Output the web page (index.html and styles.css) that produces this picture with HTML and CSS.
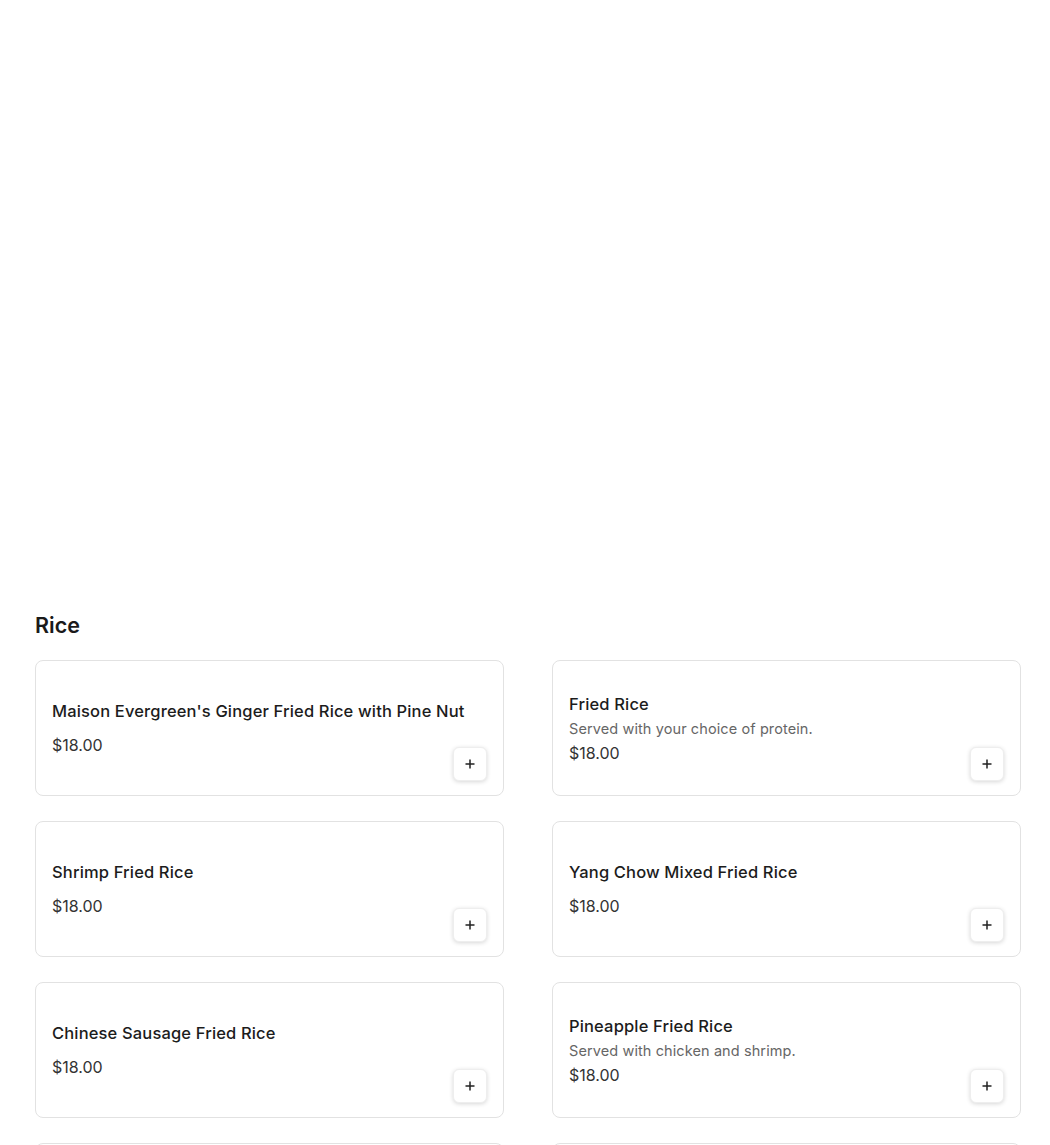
FILE: index.html
```html
<!DOCTYPE html>
<html lang="en">
<head>
<meta charset="utf-8">
<title>Rice</title>
<link rel="stylesheet" href="styles.css">
</head>
<body>
<div class="hero"></div>
<section class="section">
  <h2 class="section-title">Rice</h2>
  <div class="grid">
    <div class="card">
      <div class="info">
        <div class="name">Maison Evergreen's Ginger Fried Rice with Pine Nut</div>
        <div class="price">$18.00</div>
      </div>
      <button class="add" aria-label="Add"><svg viewBox="0 0 12 12" width="12" height="12"><path d="M6 1.5v9M1.5 6h9" stroke="#222" stroke-width="1.5" fill="none"/></svg></button>
    </div>
    <div class="card">
      <div class="info">
        <div class="name">Fried Rice</div>
        <div class="desc">Served with your choice of protein.</div>
        <div class="price">$18.00</div>
      </div>
      <button class="add" aria-label="Add"><svg viewBox="0 0 12 12" width="12" height="12"><path d="M6 1.5v9M1.5 6h9" stroke="#222" stroke-width="1.5" fill="none"/></svg></button>
    </div>
    <div class="card">
      <div class="info">
        <div class="name">Shrimp Fried Rice</div>
        <div class="price">$18.00</div>
      </div>
      <button class="add" aria-label="Add"><svg viewBox="0 0 12 12" width="12" height="12"><path d="M6 1.5v9M1.5 6h9" stroke="#222" stroke-width="1.5" fill="none"/></svg></button>
    </div>
    <div class="card">
      <div class="info">
        <div class="name">Yang Chow Mixed Fried Rice</div>
        <div class="price">$18.00</div>
      </div>
      <button class="add" aria-label="Add"><svg viewBox="0 0 12 12" width="12" height="12"><path d="M6 1.5v9M1.5 6h9" stroke="#222" stroke-width="1.5" fill="none"/></svg></button>
    </div>
    <div class="card">
      <div class="info">
        <div class="name">Chinese Sausage Fried Rice</div>
        <div class="price">$18.00</div>
      </div>
      <button class="add" aria-label="Add"><svg viewBox="0 0 12 12" width="12" height="12"><path d="M6 1.5v9M1.5 6h9" stroke="#222" stroke-width="1.5" fill="none"/></svg></button>
    </div>
    <div class="card">
      <div class="info">
        <div class="name">Pineapple Fried Rice</div>
        <div class="desc">Served with chicken and shrimp.</div>
        <div class="price">$18.00</div>
      </div>
      <button class="add" aria-label="Add"><svg viewBox="0 0 12 12" width="12" height="12"><path d="M6 1.5v9M1.5 6h9" stroke="#222" stroke-width="1.5" fill="none"/></svg></button>
    </div>
    <div class="card card-peek"></div>
    <div class="card card-peek"></div>
  </div>
</section>
</body>
</html>
```
FILE: styles.css
```css
* { box-sizing: border-box; }
html, body { margin: 0; padding: 0; background: #fff; }
body {
  font-family: "Inter", "Liberation Sans", sans-serif;
  color: #1f1f1f;
}
.hero { height: 610px; }
.section { padding: 0 0 40px 35px; width: 1021px; }
.section-title {
  margin: 0 0 20px;
  font-size: 21.5px;
  line-height: 30px;
  font-weight: 600;
  color: #1a1a1a;
}
.grid {
  display: grid;
  grid-template-columns: 1fr 1fr;
  column-gap: 48px;
  row-gap: 25px;
}
.card {
  position: relative;
  display: flex;
  align-items: center;
  height: 136px;
  padding: 0 16px;
  border: 1px solid #e2e2e2;
  border-radius: 8px;
  background: #fff;
}
.info { flex: 1; min-width: 0; }
.name {
  font-size: 16.5px;
  line-height: 24px;
  font-weight: 500;
  color: #1c1c1c;
  letter-spacing: 0.15px;
}
.desc {
  margin-top: 2px;
  font-size: 14.5px;
  line-height: 21px;
  color: #666;
  letter-spacing: 0.1px;
}
.price {
  margin-top: 10px;
  font-size: 16px;
  line-height: 24px;
  color: #333;
}
.desc + .price { margin-top: 2px; }
.add {
  position: absolute;
  right: 16px;
  bottom: 14px;
  width: 34px;
  height: 34px;
  padding: 0;
  display: flex;
  align-items: center;
  justify-content: center;
  border: 1px solid #eee;
  border-radius: 6px;
  background: #fff;
  box-shadow: 0 1px 4px rgba(0, 0, 0, 0.16);
  cursor: pointer;
}
```
